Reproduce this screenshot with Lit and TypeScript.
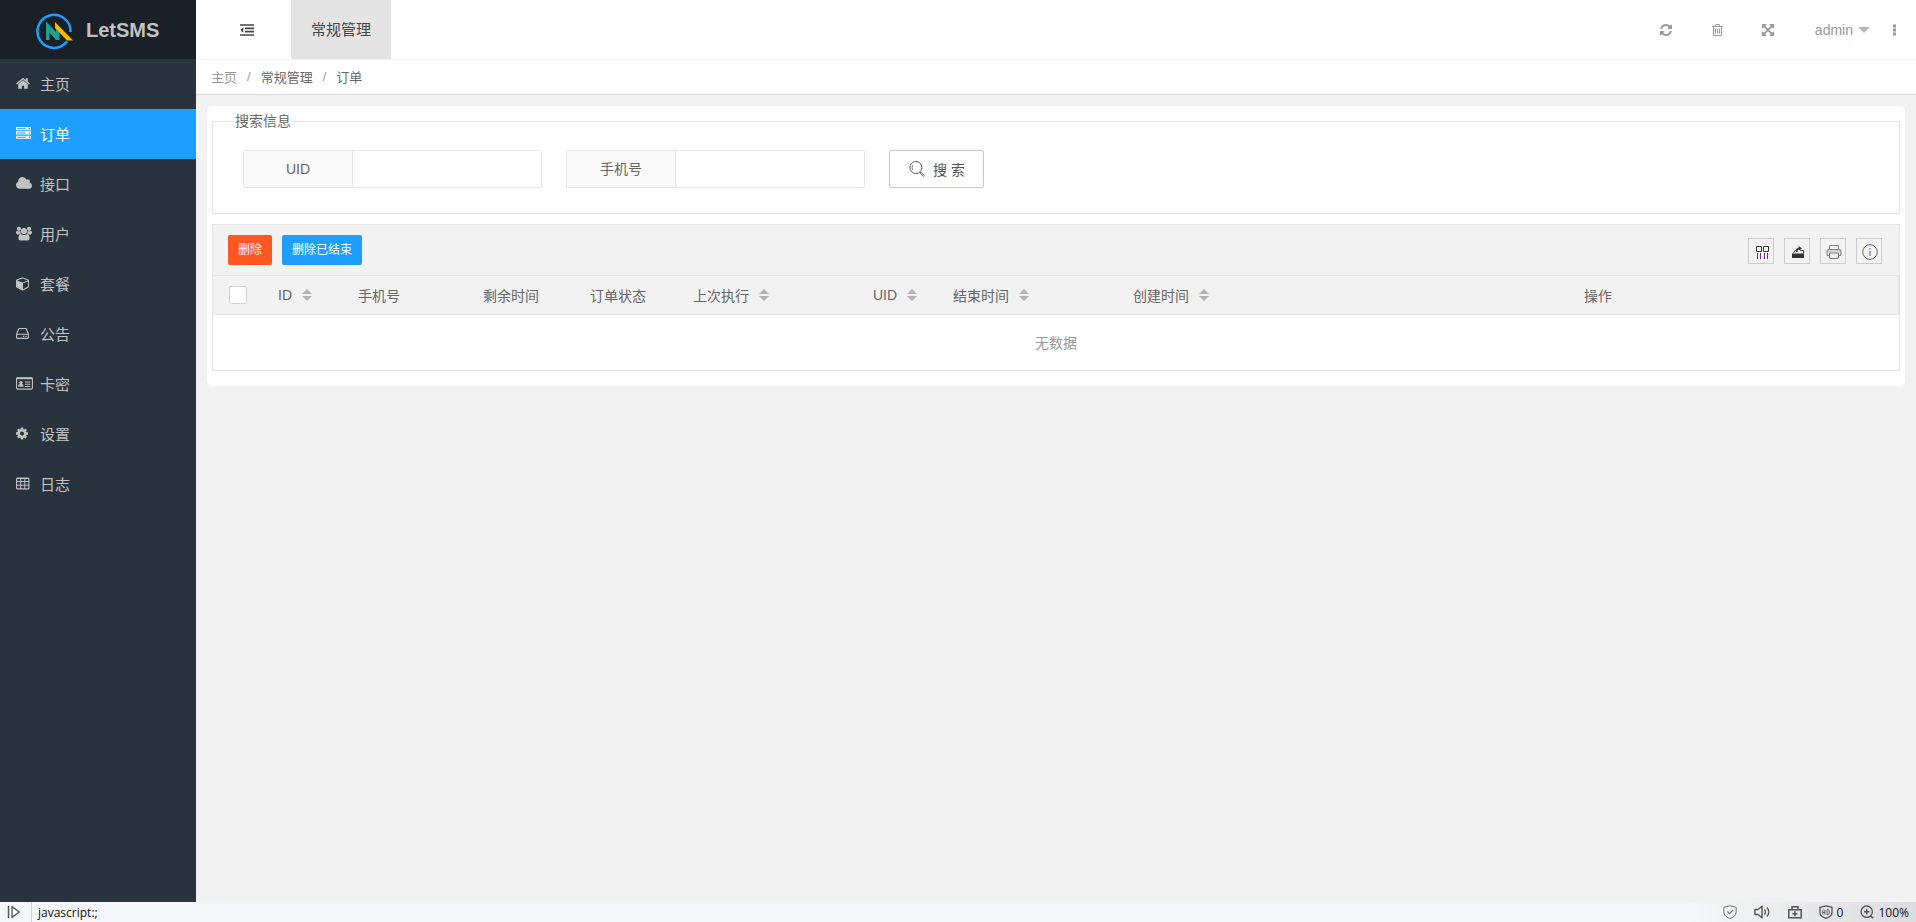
import { LitElement, html, css, svg, nothing } from "lit";
import { customElement, property, state } from "lit/decorators.js";

type Glyph = { box: string; w: number; h: number; body: unknown };

const p = (d: string) => svg`<path d=${d} fill="currentColor"></path>`;

const GLYPHS: Record<string, Glyph> = {
  home: { box: "64 0 1664 1792", w: 14, h: 15, body: p("M1472 992v480q0 26-19 45t-45 19h-384v-384h-256v384h-384q-26 0-45-19t-19-45v-480q0-1 .5-3t.5-3l575-474 575 474q1 2 1 6zm223-69l-62 74q-8 9-21 11h-3q-13 0-21-7l-692-577-692 577q-12 8-24 7-13-2-21-11l-62-74q-8-10-7-23.5t11-21.5l719-599q32-26 76-26t76 26l244 204v-195q0-14 9-23t23-9h192q14 0 23 9t9 23v408l219 182q10 8 11 21.5t-7 23.5z") },
  server: { box: "0 0 1792 1792", w: 15, h: 15, body: p("M128 1408h1024v-128h-1024v128zm0-512h1024v-128h-1024v128zm1568 448q0-40-28-68t-68-28-68 28-28 68 28 68 68 28 68-28 28-68zm-1568-960h1024v-128h-1024v128zm1568 448q0-40-28-68t-68-28-68 28-28 68 28 68 68 28 68-28 28-68zm0-512q0-40-28-68t-68-28-68 28-28 68 28 68 68 28 68-28 28-68zm96 832v384h-1792v-384h1792zm0-512v384h-1792v-384h1792zm0-512v384h-1792v-384h1792z") },
  cloud: { box: "64 0 1920 1792", w: 16, h: 15, body: p("M1984 1152q0 159-112.5 271.5t-271.5 112.5h-1088q-185 0-316.5-131.5t-131.5-316.5q0-132 71-241.5t187-163.5q-2-28-2-43 0-212 150-362t362-150q158 0 286.5 88t187.5 230q70-62 166-62 106 0 181 75t75 181q0 75-41 138 129 30 213 134.5t84 239.5z") },
  users: {
    box: "0 0 16 15", w: 16, h: 15,
    body: svg`<g fill="currentColor"><circle cx="2.9" cy="2.8" r="2.1"></circle><circle cx="13.1" cy="2.8" r="2.1"></circle><circle cx="8" cy="5" r="3.1"></circle><path d="M0 6.6Q0 4.6 1.2 4.7Q2.9 5.7 4.4 4.9Q4.3 6.4 5.2 7.4Q3.8 7.5 3 8.4H1.4Q0 8.4 0 6.6zM16 6.6Q16 4.6 14.8 4.7Q13.1 5.7 11.6 4.9Q11.7 6.4 10.8 7.4Q12.2 7.5 13 8.4H14.6Q16 8.4 16 6.6zM2.4 12.3Q2.4 8 4.8 7.9Q8 9.9 11.2 7.9Q13.6 8 13.6 12.3Q13.6 14.6 11.4 14.6H4.6Q2.4 14.6 2.4 12.3z"></path></g>`,
  },
  cube: { box: "0 -64 1664 1920", w: 13, h: 15, body: p("M896 1629l640-349v-636l-640 233v752zm-64-865l698-254-698-254-698 254zm832-252v768q0 35-18 65t-49 47l-704 384q-28 16-61 16t-61-16l-704-384q-31-17-49-47t-18-65v-768q0-40 23-73t61-47l704-256q22-8 44-8t44 8l704 256q38 14 61 47t23 73z") },
  disk: {
    box: "0 0 13 15", w: 13, h: 15,
    body: svg`<path d="M.6 8.2L2.6 3Q2.8 2.5 3.4 2.5H9.6Q10.2 2.5 10.4 3L12.4 8.2V11.6Q12.4 12.4 11.6 12.4H1.4Q.6 12.4.6 11.6zM.6 8.2H12.4" fill="none" stroke="currentColor" stroke-width="1.1"></path><path d="M7 9.7h1.3V11H7zM9.5 9.7h1.3V11H9.5z" fill="currentColor"></path>`,
  },
  card: {
    box: "0 0 17 15", w: 17, h: 15,
    body: svg`<rect x=".6" y="1.9" width="15.8" height="11.2" rx="1" fill="none" stroke="currentColor" stroke-width="1.1"></rect><path d="M.6 2.4H16.4" stroke="currentColor" stroke-width="1.6"></path><circle cx="4.9" cy="6.6" r="1.7" fill="currentColor"></circle><path d="M2.2 10.8Q2.2 8.2 3.6 8H6.2Q7.6 8.2 7.6 10.8z" fill="currentColor"></path><path d="M9 6h5.3M9 8.3h5.3M9 10.5h5.3" stroke="currentColor" stroke-width="1.1"></path>`,
  },
  gear: { box: "128 0 1536 1792", w: 12, h: 15, body: p("M1152 896q0-106-75-181t-181-75-181 75-75 181 75 181 181 75 181-75 75-181zm512-109v222q0 12-8 23t-20 13l-185 28q-19 54-39 91 35 50 107 138 10 12 10 25t-9 23q-27 37-99 108t-94 71q-12 0-26-9l-138-108q-44 23-91 38-16 136-29 186-7 28-36 28h-222q-14 0-24.5-8.5t-11.5-21.5l-28-184q-49-16-90-37l-141 107q-10 9-25 9-14 0-25-11-126-114-165-168-7-10-7-23 0-12 8-23 15-21 51-66.5t54-70.5q-27-50-41-99l-183-27q-13-2-21-12.5t-8-23.5v-222q0-12 8-23t19-13l186-28q14-46 39-92-40-57-107-138-10-12-10-24 0-10 9-23 26-36 98.500-107.500t94.500-71.500q13 0 26 10l138 107q44-23 91-38 16-136 29-186 7-28 36-28h222q14 0 24.500 8.500t11.500 21.500l28 184q49 16 90 37l142-107q9-9 24-9 13 0 25 10 129 119 165 170 7 8 7 22 0 12-8 23-15 21-51 66.500t-54 70.500q26 50 41 98l183 28q13 2 21 12.500t8 23.500z") },
  grid: {
    box: "0 0 14 15", w: 14, h: 15,
    body: svg`<rect x=".6" y="2" width="12.300" height="10.900" rx="1" fill="none" stroke="currentColor" stroke-width="1.100"></rect><path d="M.6 2.500H13M.6 5.500H13M.6 9.200H13M4.700 2V13M8.800 2V13" stroke="currentColor"></path>`,
  },
  outdent: {
    box: "0 0 14 12", w: 14, h: 12,
    body: svg`<path d="M0 1h14M5 4.300h9M5 7.700h9M0 11h14" stroke="currentColor" stroke-width="1.700"></path><path d="M3.300 3.300V8.700L.4 6z" fill="currentColor"></path>`,
  },
  refresh: { box: "128 128 1536 1536", w: 12, h: 12, body: p("M1639 1056q0 5-1 7-64 268-268 434.500t-478 166.500q-146 0-282.500-55t-243.500-157l-129 129q-19 19-45 19t-45-19-19-45v-448q0-26 19-45t45-19h448q26 0 45 19t19 45-19 45l-137 137q71 66 161 102t187 36q134 0 250-65t186-179q11-17 53-117 8-23 30-23h192q13 0 22.500 9.500t9.500 22.500zm25-800v448q0 26-19 45t-45 19h-448q-26 0-45-19t-19-45 19-45l138-138q-148-137-349-137-134 0-250 65t-186 179q-11 17-53 117-8 23-30 23h-199q-13 0-22.500-9.500t-9.500-22.500v-7q65-268 270-434.500t480-166.500q146 0 284 55.500t245 156.500l130-129q19-19 45-19t45 19 19 45z") },
  trash: { box: "192 128 1408 1536", w: 11, h: 12, body: p("M704 736v576q0 14-9 23t-23 9h-64q-14 0-23-9t-9-23v-576q0-14 9-23t23-9h64q14 0 23 9t9 23zm256 0v576q0 14-9 23t-23 9h-64q-14 0-23-9t-9-23v-576q0-14 9-23t23-9h64q14 0 23 9t9 23zm256 0v576q0 14-9 23t-23 9h-64q-14 0-23-9t-9-23v-576q0-14 9-23t23-9h64q14 0 23 9t9 23zm128 724v-948h-896v948q0 22 7 40.500t14.500 27 10.500 8.500h832q3 0 10.500-8.500t14.500-27 7-40.500zm-672-1076h448l-48-117q-7-9-17-11h-317q-10 2-17 11zm928 32v64q0 14-9 23t-23 9h-96v948q0 83-47 143.500t-113 60.500h-832q-66 0-113-58.500t-47-141.500v-952h-96q-14 0-23-9t-9-23v-64q0-14 9-23t23-9h309l70-167q15-37 54-63t79-26h320q40 0 79 26t54 63l70 167h309q14 0 23 9t9 23z") },
  expand: { box: "128 128 1536 1536", w: 12, h: 12, body: p("M1411 541l-355 355 355 355 144-144q29-31 70-14 39 17 39 59v448q0 26-19 45t-45 19h-448q-42 0-59-40-17-39 14-69l144-144-355-355-355 355 144 144q31 30 14 69-17 40-59 40h-448q-26 0-45-19t-19-45v-448q0-42 40-59 39-17 69 14l144 144 355-355-355-355-144 144q-19 19-45 19-12 0-24-5-40-17-40-59v-448q0-26 19-45t45-19h448q42 0 59 40 17 39-14 69l-144 144 355 355 355-355-144-144q-31-30-14-69 17-40 59-40h448q26 0 45 19t19 45v448q0 42-39 59-13 5-25 5-26 0-45-19z") },
  dots: { box: "0 0 3 12", w: 3, h: 12, body: p("M0 .5h3v3H0zM0 4.500h3v3H0zM0 8.500h3v3H0z") },
  caret: { box: "0 0 12 6", w: 12, h: 6, body: p("M0 0h12L6 6z") },
  search: {
    box: "0 0 16 16", w: 16, h: 16,
    body: svg`<circle cx="6.900" cy="6.500" r="6" fill="none" stroke="currentColor"></circle><path d="M3.700 4Q2.500 6.500 3.700 9" fill="none" stroke="currentColor" stroke-width=".7"></path><path d="M11.200 11l1 1" stroke="currentColor"></path><path d="M12.300 11.500l3 3-.9.900-3-3z" fill="none" stroke="currentColor" stroke-width=".9"></path>`,
  },
  columns: { box: "0 0 16 16", w: 16, h: 16, body: svg`<path d="M2.500 2.500h5v5h-5zM9.500 2.500h5v5h-5z" fill="none" stroke="#333"></path><path d="M3.500 9v6M6.500 9v6M10.500 9v6M13.500 9v6" stroke="#6b2d7d"></path>` },
  upload: { box: "0 0 14 14", w: 14, h: 14, body: svg`<path d="M1 8.500h12V12.500q0 .5-.5.5h-11q-.5 0-.5-.5z" fill="#333"></path><path d="M2.500 8L4 5.500H5.500M9 5.500H12.500V8.500" fill="none" stroke="#333" stroke-width=".9"></path><path d="M5 7Q4.700 3 7.800 2.600V1L11 3.400 7.800 5.600V4.300Q6.300 4.500 6.500 7z" fill="#333"></path>` },
  printer: { box: "0 0 16 16", w: 16, h: 16, body: svg`<g fill="none" stroke="#5b87a8" stroke-width="1.100"><path d="M3.500 5V2q0-.5.5-.5h8q.5 0 .5.5v3" stroke="#888"></path><path d="M3.500 11.500H2q-.9 0-.9-1V7.500Q1.100 5.500 3 5.500h10q1.900 0 1.900 2v3q0 1-.9 1h-1.500"></path><path d="M2 7h12" stroke="#bbb"></path><path d="M3.500 9h9v4q0 1.500-1.500 1.500H5q-1.500 0-1.500-1.500z" stroke="#777"></path></g>` },
  info: { box: "0 0 16 16", w: 16, h: 16, body: svg`<circle cx="8" cy="8" r="7.300" fill="none" stroke="#666"></circle><path d="M8 4v1.600M8 7v5" stroke="#7d99ab" stroke-width="1.500"></path>` },
  panel: { box: "0 0 14 14", w: 14, h: 14, body: svg`<path d="M1.500 1v12" stroke="#555" stroke-width="1.500"></path><path d="M5 1.600L12.400 7 5 12.400z" fill="none" stroke="#555" stroke-width="1.300" stroke-linejoin="round"></path>` },
  shield: { box: "0 0 14 14", w: 14, h: 14, body: svg`<path d="M7 .7L13.200 2.300V7Q13.200 11.500 7 13.500.8 11.500.8 7V2.300z" fill="none" stroke="#777"></path><path d="M4.300 6.500l2.200 2.200 3.600-3.700" fill="none" stroke="#777" stroke-width="1.200"></path>` },
  sound: { box: "0 0 17 14", w: 17, h: 14, body: svg`<path d="M1 4.500h3L8 1.300v11.400L4 9.500H1z" fill="none" stroke="#555" stroke-width="1.400" stroke-linejoin="round"></path><path d="M10.500 4.500q2 2.500 0 5M13 2.500q3.600 4.500 0 9" fill="none" stroke="#555" stroke-width="1.300"></path>` },
  kit: { box: "0 0 14 14", w: 14, h: 14, body: svg`<path d="M.8 4.700h12.400v8H.8zM4 4.500V1.800h6v2.700M7 6.300v5M4.500 8.800h5" fill="none" stroke="#555" stroke-width="1.500"></path>` },
  block: { box: "0 0 14 14", w: 14, h: 14, body: svg`<path d="M7 .8L13 2.300V7.500Q13 11.500 7 13.300 1 11.500 1 7.500V2.300z" fill="none" stroke="#555" stroke-width="1.300"></path><path d="M3.800 9.500V5.500l1-1 1 1v4M3.800 7.500h2M8 4.500v5h1l1.200-1V5.500L9 4.500z" fill="none" stroke="#555" stroke-width=".9"></path>` },
  zoom: { box: "0 0 14 14", w: 14, h: 14, body: svg`<circle cx="6.700" cy="6.700" r="5.700" fill="none" stroke="#555" stroke-width="1.300"></circle><path d="M6.700 4v5.400M4 6.700h5.400M10.700 10.700L13.200 13.200" stroke="#555" stroke-width="1.500"></path>` },
};

const icon = (name: string) => {
  const g = GLYPHS[name];
  return html`<svg class="icon" width=${g.w} height=${g.h} viewBox=${g.box} aria-hidden="true">${g.body}</svg>`;
};

const MENU = [
  { icon: "home", label: "主页" },
  { icon: "server", label: "订单" },
  { icon: "cloud", label: "接口" },
  { icon: "users", label: "用户" },
  { icon: "cube", label: "套餐" },
  { icon: "disk", label: "公告" },
  { icon: "card", label: "卡密" },
  { icon: "gear", label: "设置" },
  { icon: "grid", label: "日志" },
];

const COLUMNS = [
  { label: "ID", width: 80, sort: true },
  { label: "手机号", width: 125 },
  { label: "剩余时间", width: 107 },
  { label: "订单状态", width: 103 },
  { label: "上次执行", width: 180, sort: true },
  { label: "UID", width: 80, sort: true },
  { label: "结束时间", width: 180, sort: true },
  { label: "创建时间", width: 180, sort: true },
  { label: "操作", center: true },
] as { label: string; width?: number; sort?: boolean; center?: boolean }[];

const base = css`
  * { box-sizing: border-box; }
  a { color: inherit; text-decoration: none; }
  button { font: inherit; color: inherit; background: none; border: 0; padding: 0; margin: 0; cursor: pointer; }
  .icon { display: block; flex: none; }
`;

@customElement("side-menu")
class SideMenu extends LitElement {
  @property() active = "订单";

  static styles = [base, css`
    :host { display: block; background: #28333e; color: #c2c2c2; }
    .brand { display: flex; align-items: center; gap: 12px; height: 59px; padding: 2px 0 0 36px; background: #192027; font-size: 20px; font-weight: 700; color: #c2c2c2; }
    .list { list-style: none; margin: 0; padding: 0; }
    .link { display: flex; align-items: center; height: 50px; padding: 0 0 2px 16px; font-size: 15px; }
    .glyph { width: 24px; }
    .link.on { background: #1e9fff; color: #fff; }
  `];

  render() {
    return html`
      <a class="brand" href="#">
        <svg class="icon" width="38" height="38" viewBox="0 0 38 38" aria-hidden="true">
          <path d="M31.200 29.300A16.500 16.500 0 1 1 34.500 20" fill="none" stroke="#1e9fff" stroke-width="2.500"></path>
          <path d="M10 28V9.500L20 20V17L23.500 20.500V28H20L13.500 20.500V28z" fill="#1fa08c"></path>
          <path d="M19 10L37 28.500H31L19 16z" fill="#ffb800"></path>
        </svg>
        LetSMS
      </a>
      <ul class="list">
        ${MENU.map((m) => html`<li><a class="link ${m.label === this.active ? "on" : ""}" href="#"><span class="glyph">${icon(m.icon)}</span>${m.label}</a></li>`)}
      </ul>`;
  }
}

@customElement("top-bar")
class TopBar extends LitElement {
  static styles = [base, css`
    :host { display: block; background: #fff; }
    .bar { display: flex; height: 60px; border-bottom: 1px solid #f4f4f4; }
    .fold { display: flex; align-items: center; width: 95px; padding-left: 44px; color: #444; }
    .tab { display: flex; align-items: center; padding: 0 20px 2px; font-size: 15px; color: #444; background: #e4e4e4; }
    .tools { display: flex; align-items: center; margin-left: auto; padding-right: 20px; color: #999; }
    .tool { display: flex; align-items: center; justify-content: center; width: 51px; height: 100%; }
    .user { display: flex; align-items: center; gap: 5px; font-size: 14px; margin: 0 23px 0 21px; }
    .user .icon { color: #b8b8b8; }
    .crumbs { display: flex; align-items: center; gap: 10px; height: 35px; padding: 0 0 2px 15px; font-size: 13px; color: #666; border-bottom: 1px solid #dcdcdc; }
    .crumbs .root, .crumbs .sep { color: #999; }
  `];

  render() {
    return html`
      <header class="bar">
        <button class="fold" aria-label="收起菜单">${icon("outdent")}</button>
        <a class="tab" href="#">常规管理</a>
        <div class="tools">
          <button class="tool" aria-label="刷新">${icon("refresh")}</button>
          <button class="tool" aria-label="清理">${icon("trash")}</button>
          <button class="tool" aria-label="全屏">${icon("expand")}</button>
          <button class="user">admin ${icon("caret")}</button>
          <button aria-label="更多">${icon("dots")}</button>
        </div>
      </header>
      <nav class="crumbs">
        <a class="root" href="#">主页</a><span class="sep">/</span><a href="#">常规管理</a><span class="sep">/</span><span>订单</span>
      </nav>`;
  }
}

@customElement("order-panel")
class OrderPanel extends LitElement {
  @state() private uid = "";
  @state() private phone = "";

  static styles = [base, css`
    :host { display: block; margin: 11px; padding: 4px 5px 15px; background: #fff; border-radius: 5px; color: #666; font-size: 14px; }
    .filter { margin: 0 0 10px; padding: 18px 30px 25px; border: 1px solid #e6e6e6; min-width: 0; }
    .filter legend { margin-left: -10px; padding: 0 2px; line-height: 22px; }
    .fields { display: flex; flex-wrap: wrap; gap: 24px; }
    .field { display: flex; width: 299px; height: 38px; border: 1px solid #e6e6e6; border-radius: 2px; }
    .field label { width: 109px; line-height: 36px; text-align: center; background: #fafafa; border-right: 1px solid #e6e6e6; }
    .field input { flex: 1; min-width: 0; border: 0; outline: 0; padding: 0 10px; font: inherit; color: inherit; background: #fff; }
    .find { display: flex; align-items: center; gap: 8px; height: 38px; padding: 0 18px 0 19px; border: 1px solid #c9c9c9; border-radius: 2px; color: #555; }
    .grid { border: 1px solid #e6e6e6; }
    .toolbar { display: flex; align-items: center; gap: 10px; height: 50px; padding: 0 17px 0 15px; background: #f2f2f2; }
    .btn { height: 30px; padding: 0 10px; border-radius: 2px; color: #fff; font-size: 12px; line-height: 30px; }
    .danger { background: #ff5722; }
    .normal { background: #1e9fff; }
    .tools { display: flex; gap: 10px; margin-left: auto; padding-top: 2px; }
    .tool { display: flex; align-items: center; justify-content: center; width: 26px; height: 26px; padding: 2px 0 0 2px; border: 1px solid #ccc; }
    .table { width: 100%; table-layout: fixed; border-collapse: separate; border-spacing: 0; }
    .table th { height: 40px; padding: 0 15px 1px; font-weight: 400; text-align: left; white-space: nowrap; background: #f2f2f2; border: solid #e6e6e6; border-width: 1px 0; }
    .table th:last-child { border-right-width: 1px; }
    .table th.center { text-align: center; }
    .head { display: inline-flex; align-items: center; gap: 10px; }
    .sort { color: #b2b2b2; }
    .check-col { width: 50px; }
    .check { display: block; appearance: none; width: 18px; height: 18px; margin: 0; margin-left: 1px; background: #fff; border: 1px solid #d2d2d2; border-radius: 2px; }
    .check:checked { background: #1e9fff; }
    .table .empty { height: 55px; padding: 0 0 2px; text-align: center; color: #999; }
  `];

  render() {
    return html`
      <fieldset class="filter">
        <legend>搜索信息</legend>
        <div class="fields">
          <div class="field"><label for="uid">UID</label><input id="uid" .value=${this.uid} @input=${(e: Event) => (this.uid = (e.target as HTMLInputElement).value)} /></div>
          <div class="field"><label for="phone">手机号</label><input id="phone" .value=${this.phone} @input=${(e: Event) => (this.phone = (e.target as HTMLInputElement).value)} /></div>
          <button class="find">${icon("search")}<span>搜 索</span></button>
        </div>
      </fieldset>
      <section class="grid">
        <div class="toolbar">
          <button class="btn danger">删除</button>
          <button class="btn normal">删除已结束</button>
          <div class="tools">
            <button class="tool" aria-label="筛选列">${icon("columns")}</button>
            <button class="tool" aria-label="导出">${icon("upload")}</button>
            <button class="tool" aria-label="打印">${icon("printer")}</button>
            <button class="tool" aria-label="提示">${icon("info")}</button>
          </div>
        </div>
        <table class="table">
          <colgroup>
            <col class="check-col" />
            ${COLUMNS.map((c) => html`<col style=${c.width ? `width:${c.width}px` : nothing} />`)}
          </colgroup>
          <thead>
            <tr>
              <th><input class="check" type="checkbox" aria-label="全选" /></th>
              ${COLUMNS.map((c) => html`<th class=${c.center ? "center" : ""}><span class="head">${c.label}${c.sort
                ? html`<svg class="icon sort" width="10" height="12" viewBox="0 0 10 12" aria-hidden="true"><path d="M5 0L10 5H0zM0 7H10L5 12z" fill="currentColor"></path></svg>`
                : nothing}</span></th>`)}
            </tr>
          </thead>
          <tbody>
            <tr><td class="empty" colspan=${COLUMNS.length + 1}>无数据</td></tr>
          </tbody>
        </table>
      </section>`;
  }
}

@customElement("status-bar")
class StatusBar extends LitElement {
  static styles = [base, css`
    :host { display: flex; align-items: center; height: 20px; background: linear-gradient(90deg, #f6f7fa 88%, #dcdcde); color: #111; font: 12px "Open Sans", "Noto Sans", sans-serif; }
    .toggle { display: flex; align-items: center; height: 100%; padding: 0 10px 0 7px; border-right: 1px solid #d4d4d4; }
    .text { padding-left: 6px; }
    .info { display: flex; align-items: center; gap: 17px; margin-left: auto; padding-right: 7px; }
    .pair { display: flex; align-items: center; gap: 4px; }
  `];

  render() {
    return html`
      <button class="toggle" aria-label="侧栏">${icon("panel")}</button>
      <span class="text">javascript:;</span>
      <div class="info">
        ${icon("shield")}${icon("sound")}${icon("kit")}
        <span class="pair">${icon("block")}0</span>
        <span class="pair">${icon("zoom")}100%</span>
      </div>`;
  }
}

@customElement("app-root")
class AppRoot extends LitElement {
  static styles = [base, css`
    :host { display: flex; flex-direction: column; min-height: 100vh; background: #f2f2f2; font-family: "Liberation Sans", "Noto Sans CJK SC", sans-serif; }
    .body { display: flex; flex: 1; }
    side-menu { flex: none; width: 196px; }
    .main { flex: 1; min-width: 0; }
  `];

  render() {
    return html`
      <div class="body">
        <side-menu></side-menu>
        <main class="main">
          <top-bar></top-bar>
          <order-panel></order-panel>
        </main>
      </div>
      <status-bar></status-bar>`;
  }
}
